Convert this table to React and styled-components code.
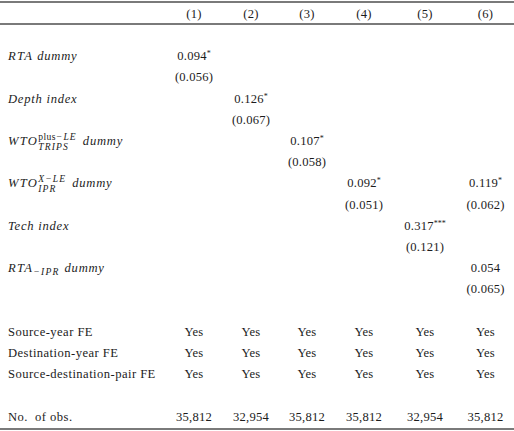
import React from "react"
import styled, { createGlobalStyle } from "styled-components"

const GlobalStyle = createGlobalStyle`
  html, body {
    margin: 0;
    padding: 0;
    background: #ffffff;
  }
  body {
    font-family: "Liberation Serif", "Times New Roman", serif;
    color: #1c1c1c;
  }
`

const COLS = "165px 58px 56px 56px 58px 64px 57px"

const Table = styled.div`
  width: 514px;
  padding-top: 1px;
  font-size: 12.6px;
  letter-spacing: 0.2px;
`

const Row = styled.div`
  display: grid;
  grid-template-columns: ${COLS};
  align-items: center;
  height: 21.2px;
  white-space: nowrap;
`

const HeadRow = styled(Row)`
  border-top: 2px solid #7a7a7a;
  border-bottom: 2px solid #7a7a7a;
  padding-top: 2px;
  box-sizing: content-box;
  height: 18px;
`

const LastRow = styled(Row)`
  border-bottom: 2px solid #7a7a7a;
  height: 21.8px;
`

const Label = styled.div`
  padding-left: 8px;
  font-style: ${({ $math }) => ($math ? "italic" : "normal")};
  letter-spacing: ${({ $math }) => ($math ? "0.75px" : "0.45px")};
`

const Cell = styled.div`
  text-align: center;
`

const Star = styled.sup`
  font-size: 8px;
  vertical-align: 4px;
  line-height: 0;
  letter-spacing: 0;
`

const Var = styled.span`
  letter-spacing: 1.3px;
`

const Scripts = styled.span`
  display: inline-flex;
  flex-direction: column;
  vertical-align: 5px;
  font-size: 9.6px;
  line-height: 9.5px;
  margin: 0 6px 0 0;
  letter-spacing: 1.1px;
`

const Up = styled.span`
  font-style: normal;
  letter-spacing: 0.4px;
`

const Sub = styled.span`
  font-size: 9.6px;
  vertical-align: -3px;
  letter-spacing: 1.2px;
  margin: 0 5px 0 0;
`

const Value = ({ text }) => {
  if (!text) return <Cell />
  const m = text.match(/^([^*]*)(\**)$/)
  return (
    <Cell>
      {m[1]}
      {m[2] && <Star>{m[2]}</Star>}
    </Cell>
  )
}

const rows = [
  { blank: true },
  { label: <><Var>RTA</Var> dummy</>, math: true, vals: ["0.094*", "", "", "", "", ""] },
  { vals: ["(0.056)", "", "", "", "", ""] },
  { label: "Depth index", math: true, vals: ["", "0.126*", "", "", "", ""] },
  { vals: ["", "(0.067)", "", "", "", ""] },
  {
    label: (
      <>
        <Var>WTO</Var>
        <Scripts>
          <span>
            <Up>plus</Up>−LE
          </span>
          <span>TRIPS</span>
        </Scripts>
        dummy
      </>
    ),
    math: true,
    vals: ["", "", "0.107*", "", "", ""],
  },
  { vals: ["", "", "(0.058)", "", "", ""] },
  {
    label: (
      <>
        <Var>WTO</Var>
        <Scripts>
          <span>X−LE</span>
          <span>IPR</span>
        </Scripts>
        dummy
      </>
    ),
    math: true,
    vals: ["", "", "", "0.092*", "", "0.119*"],
  },
  { vals: ["", "", "", "(0.051)", "", "(0.062)"] },
  { label: "Tech index", math: true, vals: ["", "", "", "", "0.317***", ""] },
  { vals: ["", "", "", "", "(0.121)", ""] },
  {
    label: (
      <>
        <Var>RTA</Var>
        <Sub>−IPR</Sub>dummy
      </>
    ),
    math: true,
    vals: ["", "", "", "", "", "0.054"],
  },
  { vals: ["", "", "", "", "", "(0.065)"] },
  { blank: true },
  { label: "Source-year FE", vals: ["Yes", "Yes", "Yes", "Yes", "Yes", "Yes"] },
  { label: "Destination-year FE", vals: ["Yes", "Yes", "Yes", "Yes", "Yes", "Yes"] },
  { label: "Source-destination-pair FE", vals: ["Yes", "Yes", "Yes", "Yes", "Yes", "Yes"] },
  { blank: true },
]

const obs = ["35,812", "32,954", "35,812", "35,812", "32,954", "35,812"]

const App = () => {
  return (
    <>
      <GlobalStyle />
      <Table>
        <HeadRow>
          <Label />
          {["(1)", "(2)", "(3)", "(4)", "(5)", "(6)"].map((h) => (
            <Cell key={h}>{h}</Cell>
          ))}
        </HeadRow>
        {rows.map((r, i) => (
          <Row key={i}>
            <Label $math={r.math}>{r.label}</Label>
            {(r.vals || ["", "", "", "", "", ""]).map((v, j) => (
              <Value key={j} text={v} />
            ))}
          </Row>
        ))}
        <LastRow>
          <Label>No.&nbsp; of obs.</Label>
          {obs.map((v, j) => (
            <Cell key={j}>{v}</Cell>
          ))}
        </LastRow>
      </Table>
    </>
  )
}

export default App
